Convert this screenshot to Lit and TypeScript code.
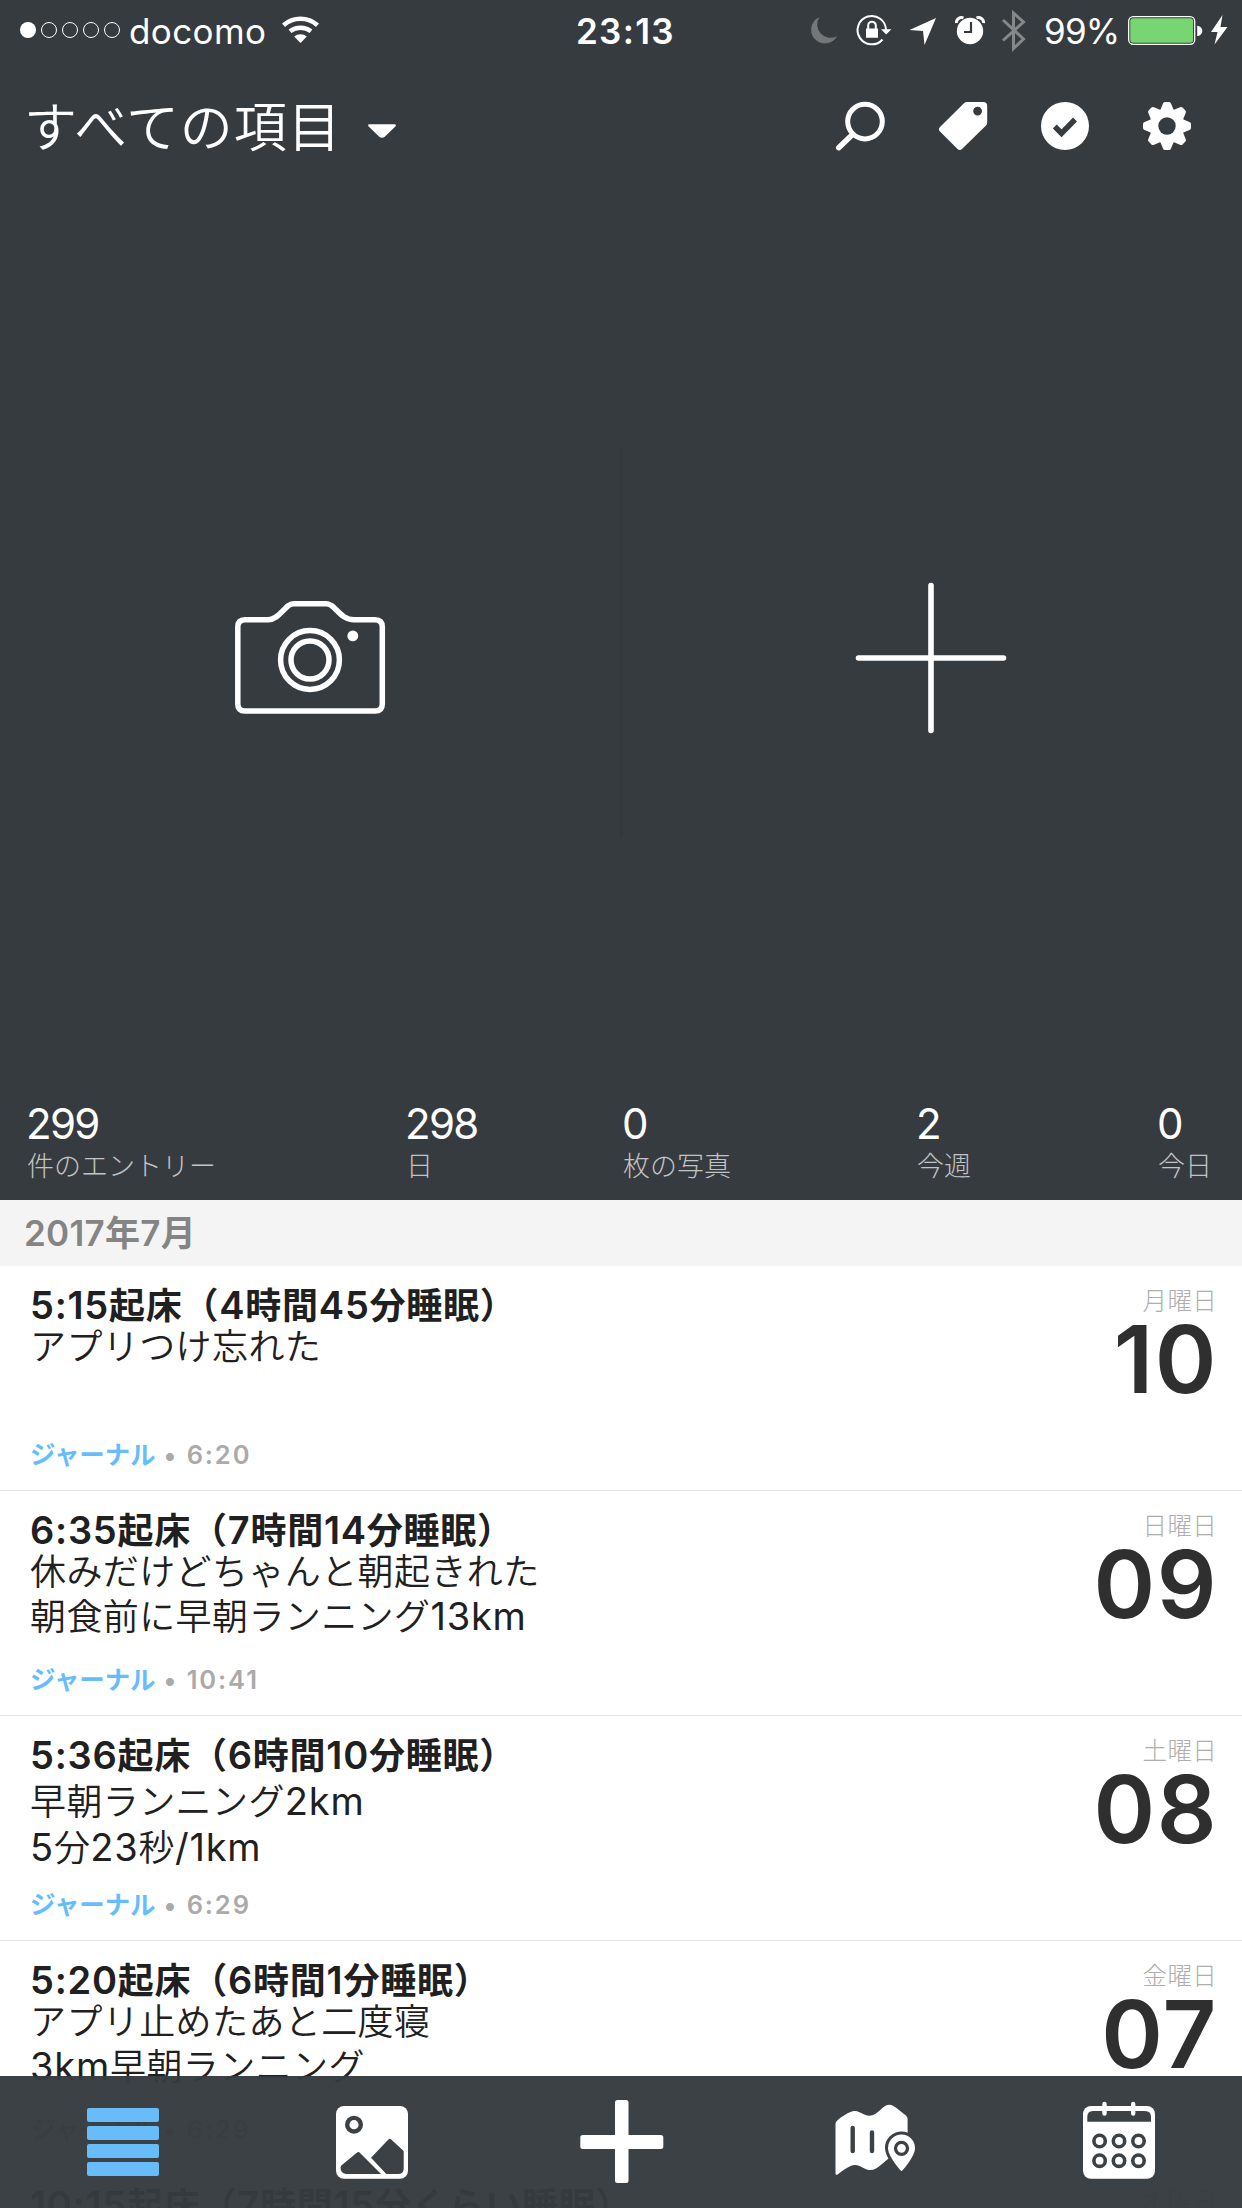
import { LitElement, html, svg, css, nothing } from "lit";
import { customElement, property } from "lit/decorators.js";
import { classMap } from "lit/directives/class-map.js";

interface Entry {
  title: string;
  lines: string[];
  time: string;
  weekday: string;
  day: string;
  spaced?: boolean;
}

const ENTRIES: Entry[] = [
  { title: "5:15起床（4時間45分睡眠）", lines: ["アプリつけ忘れた"], time: "6:20", weekday: "月曜日", day: "10" },
  {
    title: "6:35起床（7時間14分睡眠）",
    lines: ["休みだけどちゃんと朝起きれた", "朝食前に早朝ランニング13km"],
    time: "10:41",
    weekday: "日曜日",
    day: "09",
  },
  {
    title: "5:36起床（6時間10分睡眠）",
    lines: ["早朝ランニング2km", "5分23秒/1km"],
    time: "6:29",
    weekday: "土曜日",
    day: "08",
    spaced: true,
  },
  {
    title: "5:20起床（6時間1分睡眠）",
    lines: ["アプリ止めたあと二度寝", "3km早朝ランニング"],
    time: "6:29",
    weekday: "金曜日",
    day: "07",
  },
  { title: "10:15起床（7時間15分くらい睡眠）", lines: [], time: "", weekday: "木曜日", day: "" },
];

const STATS = [
  { value: "299", label: "件のエントリー" },
  { value: "298", label: "日" },
  { value: "0", label: "枚の写真" },
  { value: "2", label: "今週" },
  { value: "0", label: "今日" },
];

// Latin runs are set slightly larger than the Japanese text around them.
const runs = (text: string) =>
  text
    .split(/([\x21-\x7e]+)/)
    .filter((part) => part)
    .map((part) => (/^[\x21-\x7e]/.test(part) ? html`<span class="latin">${part}</span>` : part));

const gearTeeth = [0, 45, 90, 135, 180, 225, 270, 315].map(
  (a) => svg`<path transform="rotate(${a} 1167 126)" d="M1159.5 112 L1163 103.6 Q1163.5 102 1165 102 H1169 Q1170.5 102 1171 103.6 L1174.500 112 Z"/>`
);

const calendarRings = [2141, 2160.700].flatMap((y) =>
  [1099.600, 1119, 1138.500].map((x) => svg`<circle cx=${x} cy=${y} r="5.700" fill="none" stroke="#3c4145" stroke-width="3.600"/>`)
);

@customElement("status-bar")
export class StatusBar extends LitElement {
  static styles = css`
    :host { display: block; color: #fff; }
    .bar {
      display: grid;
      grid-template-columns: 129px 148px 298px 225px 244px 80px 118px;
      height: 60px;
      font: 400 35px/60px Inter, "Liberation Sans", sans-serif;
      white-space: nowrap;
    }
    .bar span { padding-top: 1px; height: 60px; line-height: 60px; }
    .carrier { letter-spacing: 0.4px; }
    .time { font-weight: 600; padding-left: 1px; letter-spacing: 1.300px; }
    .level { letter-spacing: -0.8px; }
    svg { display: block; height: 60px; }
  `;
  render() {
    return html`<div class="bar">
      <svg width="129" viewBox="0 0 129 60">
        <circle cx="28" cy="30" r="8" fill="#fff" />
        ${[49, 70, 91, 112].map((x) => svg`<circle cx=${x} cy="30" r="7.500" fill="none" stroke="#fff" stroke-width="1"/>`)}
      </svg>
      <span class="carrier">docomo</span>
      <svg width="298" viewBox="277 0 298 60">
        <g fill="none" stroke="#fff" stroke-width="4.500">
          <path d="M283.500 25.200 A25.500 25.500 0 0 1 317.500 25.200" />
          <path d="M290 31.300 A17 17 0 0 1 311 31.300" />
        </g>
        <path d="M294.200 36.600 A9.500 9.500 0 0 1 306.800 36.600 L300.500 43 Z" fill="#fff" />
      </svg>
      <span class="time">23:13</span>
      <svg width="244" viewBox="800 0 244 60">
        <path d="M819.500 17 A13.800 13.800 0 1 0 837.200 36 A13.300 13.300 0 0 1 819.500 17 Z" fill="#73777a" />
        <path d="M886 30 A14.200 14.200 0 1 0 882.500 39.500" fill="none" stroke="#fff" stroke-width="2" />
        <path d="M881 29.300 H891.400 L886.200 34.500 Z M866 28.500 H878 V37.800 H866 Z" fill="#fff" />
        <path d="M868.200 29 V25.500 A3.800 3.800 0 0 1 875.800 25.500 V29" fill="none" stroke="#fff" stroke-width="2" />
        <path d="M936 18 L909.500 30 L923 31 L924.500 45 Z" fill="#fff" />
        <circle cx="970" cy="31" r="13.200" fill="#fff" />
        <path d="M956.500 23 A5 5 0 0 1 963.500 18 M976.500 18 A5 5 0 0 1 983.500 23" fill="none" stroke="#fff" stroke-width="3" />
        <path d="M971 22 V32 H964" fill="none" stroke="#363b3f" stroke-width="2.200" />
        <path d="M1003 20 L1023.500 39 L1013.500 48.500 V13 L1023.500 22 L1003 40.500" fill="none" stroke="#85888a" stroke-width="3" />
      </svg>
      <span class="level">99%</span>
      <svg width="118" viewBox="1124 0 118 60">
        <rect x="1128.700" y="16.700" width="66" height="27.600" rx="4.500" fill="none" stroke="#fff" stroke-width="1.300" />
        <rect x="1130.300" y="18.300" width="62.800" height="24.400" rx="3" fill="#77d672" />
        <path d="M1197.200 25.700 A5 5 0 0 1 1197.200 36 Z" fill="#fff" />
        <path d="M1222.500 15 L1211 32 H1217.500 L1214.500 44.500 L1227.500 27 H1220.500 Z" fill="#fff" />
      </svg>
    </div>`;
  }
}

@customElement("journal-entry")
export class JournalEntry extends LitElement {
  @property({ attribute: false }) entry!: Entry;
  static styles = css`
    :host { display: block; }
    .row {
      box-sizing: border-box;
      height: 225px;
      border-bottom: 1px solid #e3e3e4;
      padding: 21px 25px 20px 30px;
      display: flex;
      justify-content: space-between;
      font-family: Inter, "Noto Sans CJK JP DemiLight", "Noto Sans CJK JP Light", "Noto Sans CJK JP", sans-serif;
      color: #202020;
      white-space: nowrap;
    }
    .main { display: flex; flex-direction: column; }
    .title {
      height: 38px;
      font: 600 36px/38px Inter, "Noto Sans CJK JP", sans-serif;
      letter-spacing: 0.750px;
    }
    .line { height: 45px; font-size: 36px; line-height: 45px; letter-spacing: 0.4px; }
    .latin { font-size: 38px; line-height: 0; }
    .line .latin { letter-spacing: 0.800px; }
    .spaced { padding-top: 4px; }
    .spaced .line { height: 46px; line-height: 46px; }
    .meta {
      margin-top: auto;
      font: 600 25.500px/30px Inter, "Noto Sans CJK JP", sans-serif;
      color: #aaa;
      letter-spacing: 1.900px;
    }
    .journal { color: #67bdfc; letter-spacing: -0.2px; }
    .date { display: flex; flex-direction: column; align-items: flex-end; }
    .weekday {
      font: 300 24.500px/26px "Noto Sans CJK JP Light", "Noto Sans CJK JP", sans-serif;
      height: 30px;
      letter-spacing: 0.3px;
      color: #aeaeae;
    }
    .day {
      font: 600 93.500px/84px Inter, sans-serif;
      letter-spacing: 1.500px;
      margin-right: -1px;
      color: #2f2f2f;
    }
  `;
  render() {
    const e = this.entry;
    return html`<div class="row">
      <div class="main">
        <div class="title">${runs(e.title)}</div>
        <div class=${classMap({ body: true, spaced: !!e.spaced })}>
          ${e.lines.map((l) => html`<div class="line">${runs(l)}</div>`)}
        </div>
        ${e.time ? html`<div class="meta"><span class="journal">ジャーナル</span> • ${e.time}</div>` : nothing}
      </div>
      <div class="date">
        <div class="weekday">${e.weekday}</div>
        ${e.day ? html`<div class="day">${e.day}</div>` : nothing}
      </div>
    </div>`;
  }
}

@customElement("tab-bar")
export class TabBar extends LitElement {
  static styles = css`
    :host { display: block; }
    .tabs {
      display: grid;
      grid-template-columns: 248px 248px 250px 248px 248px;
      height: 132px;
      background: rgba(54, 59, 63, 0.97);
    }
    svg { display: block; width: 100%; height: 132px; }
  `;
  render() {
    return html`<nav class="tabs">
      <svg viewBox="0 2076 248 132" fill="#68bcfa">
        ${[2108, 2126, 2144, 2162].map((y) => svg`<rect x="87" y=${y} width="72" height="14" rx="2"/>`)}
      </svg>
      <svg viewBox="248 2076 248 132">
        <rect x="336" y="2106" width="72" height="72.800" rx="8" fill="#fff" />
        <circle cx="354" cy="2124.700" r="6.800" fill="none" stroke="#3c4145" stroke-width="4.400" />
        <path
          d="M341.300 2165.500 L356.800 2152.800 Q358.300 2151.400 359.800 2152.800 L381 2174 H346 Q340.500 2173 340.500 2167.500 Z M371 2157.700 L388.400 2139.500 Q389.800 2138 391.200 2139.500 L403.700 2151 V2168.500 Q403.700 2174 398 2174 H386.300 Z"
          fill="#3c4145"
        />
      </svg>
      <svg viewBox="496 2076 250 132" fill="#fff">
        <rect x="615" y="2100" width="13.500" height="83" rx="2.500" />
        <rect x="580.300" y="2135" width="83" height="14" rx="2.500" />
      </svg>
      <svg viewBox="746 2076 248 132">
        <path
          d="M835.500 2124 Q835.500 2122 837 2120.700 C842 2116 847 2113.500 850.500 2112 Q855 2110 859.500 2112.200 L865 2114.700 Q870.500 2117 875.500 2113.700 C880 2110.500 882.500 2107.500 885.500 2105.700 Q889.500 2103.600 893.500 2106 C898 2109 902 2112.500 906 2115.500 Q907.600 2117 907.600 2119 V2150 L888 2159 C884 2162 880 2166 876 2168.500 Q870 2171.700 864.500 2168.500 L859.500 2166 Q855 2164 850.500 2166 C846 2168 842 2171 837.500 2174.500 Q835.500 2175.700 835.500 2173 Z"
          fill="#fff"
        />
        <path d="M852.700 2128 V2151 M872 2132.500 V2151" stroke="#3c4145" stroke-width="4.400" stroke-linecap="round" />
        <path
          d="M901.500 2171.300 C899 2169 888 2156 888 2148 A13.500 13.500 0 0 1 915 2148 C915 2156 904 2169 901.500 2171.300 Z"
          fill="#fff" stroke="#3c4145" stroke-width="6" paint-order="stroke"
        />
        <circle cx="901.500" cy="2148.300" r="6" fill="none" stroke="#3c4145" stroke-width="3.300" />
      </svg>
      <svg viewBox="994 2076 248 132">
        <rect x="1083" y="2106" width="72" height="72.800" rx="8" fill="#fff" />
        <path d="M1087.300 2121.700 V2117 Q1087.300 2111 1093 2111 H1145 Q1151 2111 1151 2117 V2121.700 Z" fill="#3c4145" />
        <path d="M1104.500 2104 V2113.500 M1133.200 2104 V2113.500" stroke="#fff" stroke-width="4.400" stroke-linecap="round" />
        ${calendarRings}
      </svg>
    </nav>`;
  }
}

@customElement("app-root")
export class AppRoot extends LitElement {
  static styles = css`
    :host {
      display: block;
      position: relative;
      width: 1242px;
      height: 2208px;
      overflow: hidden;
      background: #fff;
      font-family: Inter, "Noto Sans CJK JP", sans-serif;
    }
    .top { background: #363b3f; height: 1200px; color: #fff; display: flex; flex-direction: column; }
    .toolbar { display: flex; height: 120px; justify-content: space-between; }
    .heading { display: flex; }
    .name {
      padding-left: 24px;
      width: 316px;
      height: 120px;
      font: 400 53px/128px "Noto Sans CJK JP DemiLight", "Noto Sans CJK JP Light", "Noto Sans CJK JP", sans-serif;
      letter-spacing: 0.900px;
      white-space: nowrap;
    }
    svg { display: block; }
    .actions { display: grid; grid-template-columns: 1fr 1fr; flex: 1; align-items: start; }
    .right { display: flex; }
    .divider { width: 3px; height: 390px; margin: 267px 0 0 -1px; background: #33383b; }
    .stats {
      display: grid;
      grid-template-columns: 379px 217px 294px 241px 84px;
      padding-left: 27px;
      height: 108px;
      white-space: nowrap;
    }
    .value { font: 375 42px/46px Inter, sans-serif; letter-spacing: -1.700px; padding-top: 9px; margin-left: -1px; }
    .label {
      font: 300 27px/30px "Noto Sans CJK JP Light", "Noto Sans CJK JP", sans-serif;
      color: #c3c4c5;
      padding-top: 3px;
    }
    .month {
      height: 66px;
      box-sizing: border-box;
      padding-left: 24px;
      background: #f4f4f4;
      color: #848484;
      font: 600 35px/67px Inter, "Noto Sans CJK JP", sans-serif;
      letter-spacing: 0.3px;
    }
    .footer { position: absolute; left: 0; right: 0; bottom: 0; }
  `;
  render() {
    return html`
      <section class="top">
        <status-bar></status-bar>
        <header class="toolbar">
          <div class="heading">
            <div class="name">すべての項目</div>
            <svg width="70" height="120" viewBox="340 60 70 120">
              <path d="M369.500 124.300 H394.500 Q397 124.500 395.300 126.600 L385 136.500 Q382 139 379 136.500 L368.700 126.600 Q367 124.500 369.500 124.300 Z" fill="#fff" />
            </svg>
          </div>
          <svg width="442" height="120" viewBox="800 60 442 120" fill="#fff">
            <circle cx="865" cy="121.600" r="17.300" fill="none" stroke="#fff" stroke-width="5" />
            <path d="M852.500 134.500 L838.700 147.700" stroke="#fff" stroke-width="5.500" stroke-linecap="round" />
            <path
              fill-rule="evenodd"
              d="M967 102 H983 Q987.200 102 987.200 106.200 V122.500 Q987.200 124.300 986 125.500 L962 149 Q959.700 151 957.500 149 L940 131.500 Q937.800 129.300 940 127 L964 103.300 Q965.300 102 967 102 Z M977.600 106.700 A4.400 4.400 0 1 0 977.600 115.500 A4.400 4.400 0 1 0 977.600 106.700 Z"
            />
            <circle cx="1065" cy="126" r="24" />
            <path d="M1054.800 126.500 L1061.500 133.300 L1075 119.500" fill="none" stroke="#363b3f" stroke-width="5.500" />
            <circle cx="1167" cy="126" r="17.500" />
            ${gearTeeth}
            <circle cx="1167" cy="126" r="8.700" fill="#363b3f" />
          </svg>
        </header>
        <div class="actions">
          <svg width="621" height="790" viewBox="0 180 621 790" fill="none" stroke="#fff" stroke-width="5.500">
            <path
              d="M245 619.700 H268 C277 619.700 282 610.500 288.500 605.500 Q291.500 603.700 294 603.700 H326 Q328.500 603.700 331.500 605.500 C338 610.500 343 619.700 354 619.700 H375 Q382.300 619.700 382.300 627 V704 Q382.300 711 375 711 H245 Q237.800 711 237.800 704 V627 Q237.800 619.700 245 619.700 Z"
            />
            <circle cx="310" cy="660" r="29.400" />
            <circle cx="310" cy="660" r="19" />
            <circle cx="352.800" cy="635.900" r="5.400" fill="#fff" stroke="none" />
          </svg>
          <div class="right">
            <div class="divider"></div>
            <svg width="619" height="790" viewBox="623 180 619 790">
              <path d="M858.500 658 H1003.500 M931 585.500 V730.500" stroke="#fff" stroke-width="5.600" stroke-linecap="round" />
            </svg>
          </div>
        </div>
        <div class="stats">
          ${STATS.map(
            (s) => html`<div>
              <div class="value">${s.value}</div>
              <div class="label">${s.label}</div>
            </div>`
          )}
        </div>
      </section>
      <div class="month">2017年7月</div>
      ${ENTRIES.map((e) => html`<journal-entry .entry=${e}></journal-entry>`)}
      <tab-bar class="footer"></tab-bar>
    `;
  }
}
